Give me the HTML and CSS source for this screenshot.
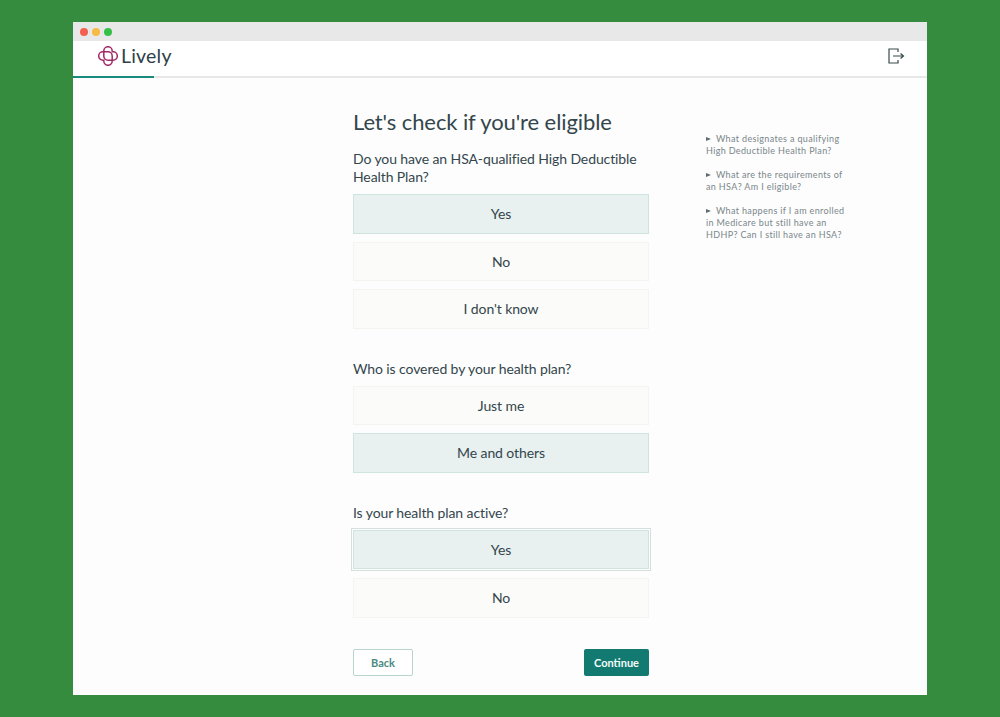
FILE: index.html
```html
<!DOCTYPE html>
<html lang="en">
<head>
  <meta charset="UTF-8" />
  <title>Lively</title>
  <link rel="stylesheet" href="styles.css">
</head>
<body>
  <div class="window">
    <div class="chrome">
      <span class="dot dot-red"></span>
      <span class="dot dot-yellow"></span>
      <span class="dot dot-green"></span>
    </div>
    <div class="topbar">
      <div class="logo">
        <svg class="logo-mark" width="20" height="20" viewBox="0 0 20 20" fill="none" stroke="#a32a66" stroke-width="1.5">
          <path d="M5.8 5.8V4.9a4.2 4.2 0 0 1 8.4 0V5.8H15.1a4.2 4.2 0 0 1 0 8.4H14.2V15.1a4.2 4.2 0 0 1-8.4 0V14.2H4.9a4.2 4.2 0 0 1 0-8.4Z"/>
          <path d="M5.8 5.8V10a4.2 4.2 0 0 0 4.2 4.2H14.2"/>
          <path d="M14.2 14.2V10a4.2 4.2 0 0 0-4.2-4.2H5.8"/>
        </svg>
        <span class="logo-text">Lively</span>
      </div>
      <svg class="logout" width="17" height="16" viewBox="0 0 17 16" fill="none" stroke="#3a4a50" stroke-width="1.2">
        <path d="M10 4V1H1V15H10V12"/>
        <path d="M5 8H15M12.5 5.5L15.5 8L12.5 10.5"/>
      </svg>
    </div>
    <div class="progress"><div class="progress-fill"></div></div>
    <div class="content">
      <div class="form">
        <h1>Let's check if you're eligible</h1>

        <p class="question">Do you have an HSA-qualified High Deductible Health Plan?</p>
        <div class="options">
          <div class="option selected">Yes</div>
          <div class="option">No</div>
          <div class="option">I don't know</div>
        </div>

        <p class="question">Who is covered by your health plan?</p>
        <div class="options">
          <div class="option">Just me</div>
          <div class="option selected">Me and others</div>
        </div>

        <p class="question">Is your health plan active?</p>
        <div class="options">
          <div class="option selected focused">Yes</div>
          <div class="option">No</div>
        </div>

        <div class="actions">
          <button class="btn btn-back">Back</button>
          <button class="btn btn-continue">Continue</button>
        </div>
      </div>
      <div class="faq">
        <p>What designates a qualifying High Deductible Health Plan?</p>
        <p>What are the requirements of an HSA? Am I eligible?</p>
        <p>What happens if I am enrolled in Medicare but still have an HDHP? Can I still have an HSA?</p>
      </div>
    </div>
  </div>
</body>
</html>
```

FILE: styles.css
```css
* {
  margin: 0;
  padding: 0;
  box-sizing: border-box;
}
body {
  background: #358c3e;
  font-family: "Lato", "Noto Sans", sans-serif;
  color: #33464c;
  height: 717px;
  padding: 22px 73px;
  overflow: hidden;
}
.window {
  height: 673px;
  background: #fdfdfd;
  display: flex;
  flex-direction: column;
}
/* Browser chrome */
.chrome {
  height: 19px;
  background: #e8e8e8;
  display: flex;
  align-items: center;
  gap: 4px;
  padding-left: 7px;
}
.dot {
  width: 8px;
  height: 8px;
  border-radius: 50%;
}
.dot-red { background: #f2604f; }
.dot-yellow { background: #f6bb42; }
.dot-green { background: #35c04a; }
/* Top bar */
.topbar {
  height: 35px;
  background: #fff;
  display: flex;
  align-items: center;
  justify-content: space-between;
  padding: 0 22px 5px 25px;
}
.logo {
  display: flex;
  align-items: center;
  gap: 3px;
}
.logo-text {
  font-size: 19.5px;
  color: #2f4148;
  letter-spacing: 0.2px;
  padding-bottom: 2px;
}
.progress {
  height: 2px;
  background: #e8e8e8;
}
.progress-fill {
  width: 81px;
  height: 2px;
  background: #1a8a7d;
}
/* Content */
.content {
  flex: 1;
  display: flex;
  padding-left: 280px;
}
.form {
  width: 296px;
}
h1 {
  font-size: 22px;
  font-weight: 400;
  line-height: 28px;
  margin-top: 30px;
  margin-bottom: 14px;
  letter-spacing: -0.1px;
}
.question {
  font-size: 14px;
  line-height: 18px;
  margin-bottom: 8px;
  letter-spacing: -0.1px;
}
.options {
  display: flex;
  flex-direction: column;
  gap: 8px;
  margin-bottom: 31px;
}
.option {
  height: 39.5px;
  background: #fbfbf9;
  border: 1px solid #f4f4f1;
  display: flex;
  align-items: center;
  justify-content: center;
  font-size: 14px;
  letter-spacing: -0.1px;
}
.option.selected {
  background: #e8f0f0;
  border-color: #cfe3df;
}
.option.focused {
  outline: 1px solid #d5dfdd;
  outline-offset: 1px;
  margin-bottom: 1px;
}
.actions {
  display: flex;
  justify-content: space-between;
  margin-top: 1px;
}
.btn {
  height: 27px;
  font-family: inherit;
  font-size: 11px;
  font-weight: 700;
  border-radius: 2px;
}
.btn-back {
  width: 60px;
  background: #fff;
  border: 1px solid #b9d3cf;
  color: #4a8a80;
}
.btn-continue {
  width: 65px;
  background: #127a70;
  border: none;
  color: #f2fbf9;
}
/* Side questions */
.faq {
  width: 140px;
  margin-left: 57px;
  padding-top: 55px;
  font-size: 9px;
  line-height: 12px;
  color: #7a868a;
  letter-spacing: 0.35px;
}
.faq p {
  margin-bottom: 12px;
}
.faq p::before {
  content: "";
  display: inline-block;
  border-left: 5px solid #5f6b70;
  border-top: 2.5px solid transparent;
  border-bottom: 2.5px solid transparent;
  margin-right: 5px;
  vertical-align: 1px;
}
```
